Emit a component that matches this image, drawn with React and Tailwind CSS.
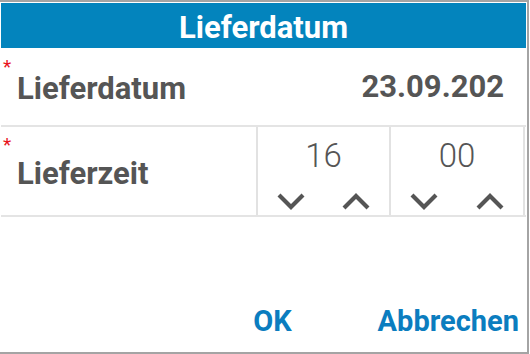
import React from "react";

const LABEL = "text-[31px] font-bold text-[#555555] leading-none";

function Chevron({ up }) {
  return (
    <svg width="28" height="17" viewBox="0 0 28 17" className="block">
      <path
        d={up ? "M2 15 L14 3 L26 15" : "M2 2 L14 14 L26 2"}
        fill="none"
        stroke="#555555"
        strokeWidth="4.2"
      />
    </svg>
  );
}

function Spinner({ value, first }) {
  return (
    <div
      className={`h-full flex flex-col items-center border-[#e2e2e2] ${
        first ? "w-[135px] border-l-2 border-r-2" : "w-[134px] border-r-2"
      }`}
    >
      <div className="mt-[12px] text-[33px] font-light text-[#555555] leading-none">
        {value}
      </div>
      <div className="mt-auto mb-[5px] w-full flex">
        <div className="flex-1 flex justify-center">
          <Chevron />
        </div>
        <div className="flex-1 flex justify-center">
          <Chevron up />
        </div>
      </div>
    </div>
  );
}

export default function App() {
  return (
    <div className="w-[530px] h-[354px] bg-white overflow-hidden font-[Roboto,sans-serif]">
      <div className="w-[529px] h-[354px] flex flex-col border-t-2 border-r-2 border-b-2 border-[#a4a4a4] pt-px pl-px pr-px">
        <div className="h-[45px] shrink-0 bg-[#0384bd] flex items-center justify-center">
          <span className="mt-[4px] text-[31px] font-bold text-white leading-none">
            Lieferdatum
          </span>
        </div>

        <div className="relative h-[79px] shrink-0 flex items-center border-b-2 border-[#e4e4e4]">
          <span className="absolute left-[2px] top-[9px] text-[19px] text-[#e8141b] leading-none">
            *
          </span>
          <span className={`${LABEL} pl-[16px] mt-[4px]`}>Lieferdatum</span>
          <span className="ml-auto pr-[22px] text-[31px] font-bold text-[#555555] leading-none">
            23.09.202
          </span>
        </div>

        <div className="relative h-[90px] shrink-0 flex items-center border-b-2 border-[#e4e4e4]">
          <span className="absolute left-[2px] top-[8px] text-[19px] text-[#e8141b] leading-none">
            *
          </span>
          <span className={`${LABEL} pl-[16px] mt-[4px]`}>Lieferzeit</span>
          <div className="ml-auto mr-px h-full flex">
            <Spinner value="16" first />
            <Spinner value="00" />
          </div>
        </div>

        <div className="flex-1 flex items-end justify-end gap-[86px] pr-[7px] pb-[16px]">
          <button className="text-[29px] font-bold text-[#0b7dbf] leading-none">OK</button>
          <button className="text-[29px] font-bold text-[#0b7dbf] leading-none">Abbrechen</button>
        </div>
      </div>
    </div>
  );
}
